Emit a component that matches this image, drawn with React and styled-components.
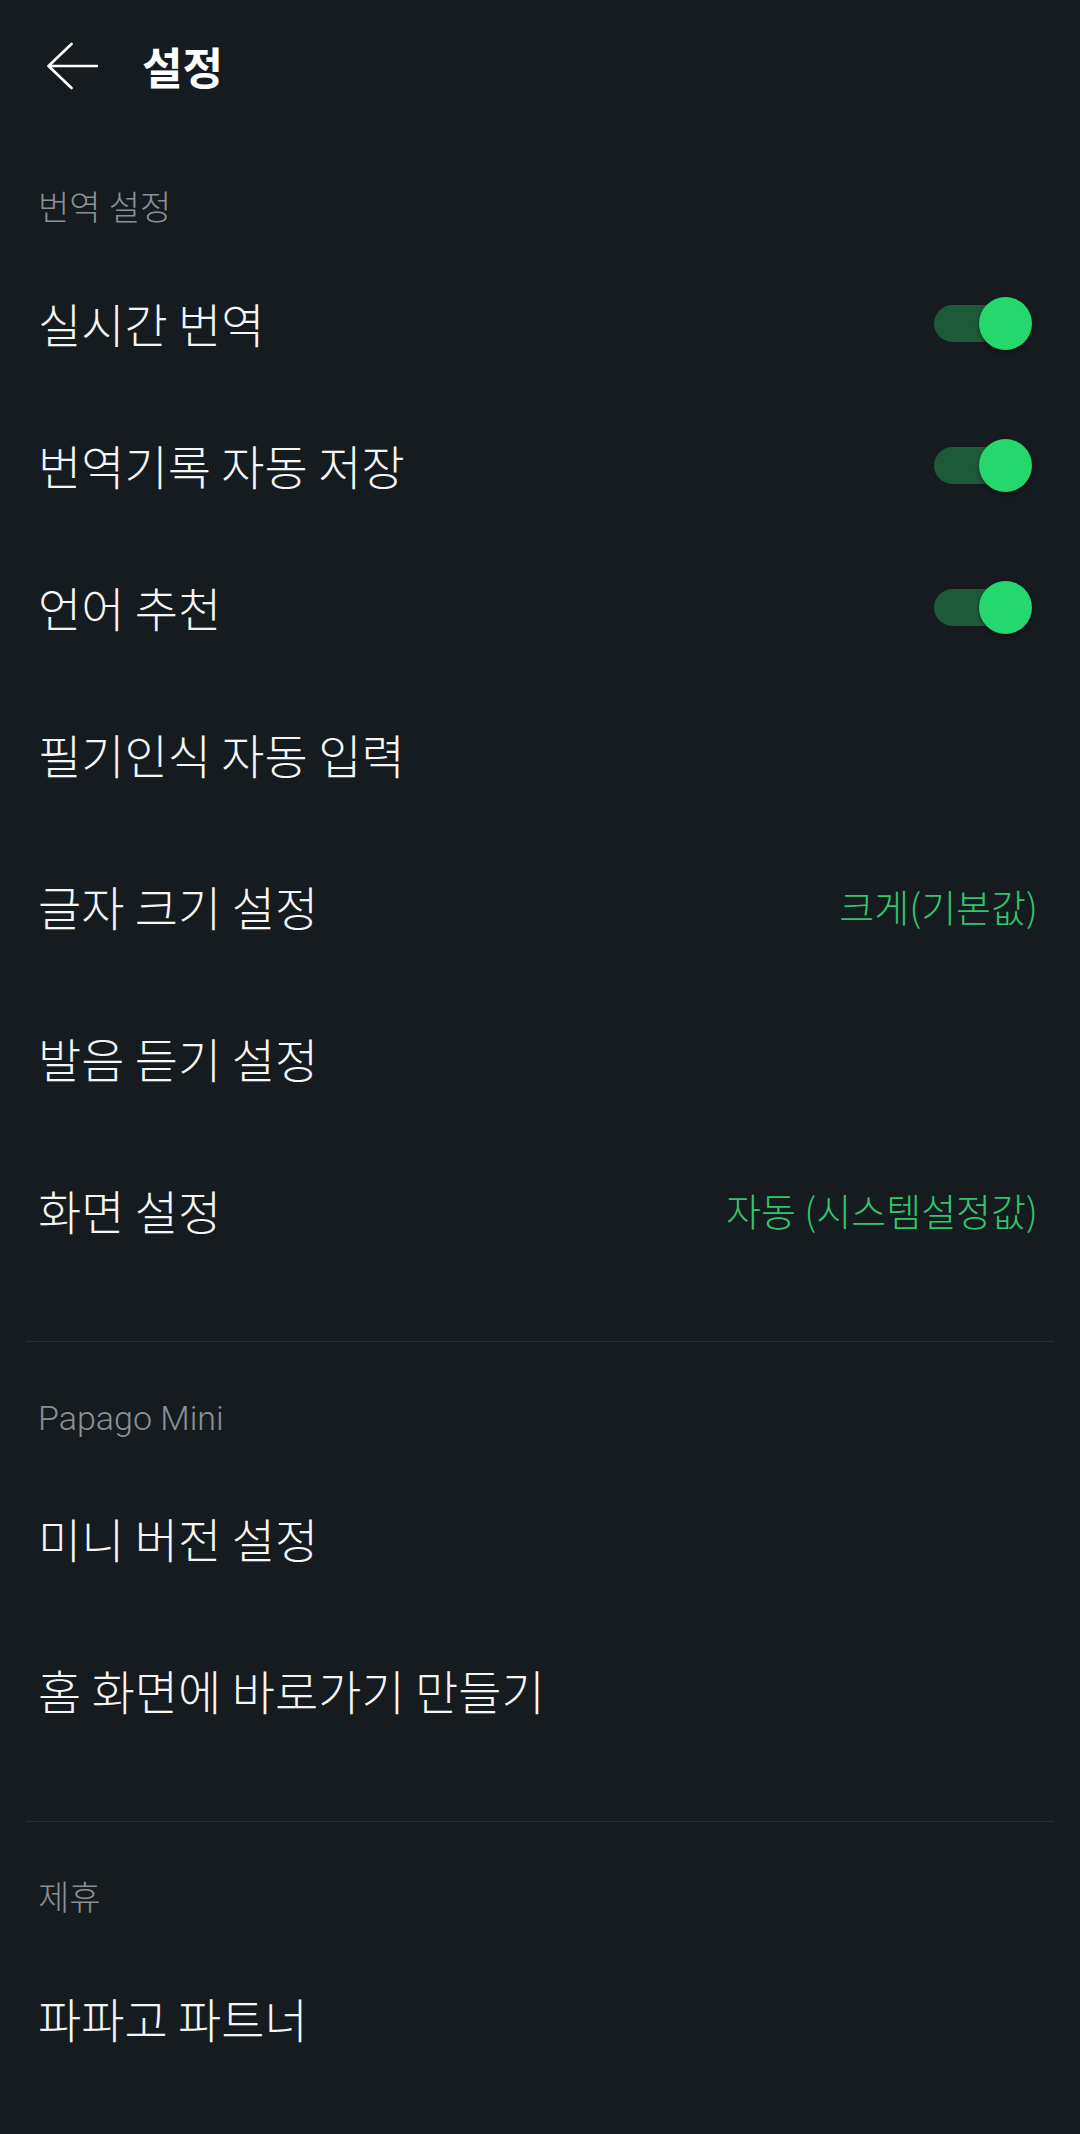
import React from "react";
import styled, { createGlobalStyle } from "styled-components";

const GlobalStyle = createGlobalStyle`
  html, body {
    margin: 0;
    padding: 0;
    background: #161b1f;
  }
  body {
    font-family: Roboto, "Noto Sans CJK KR", sans-serif;
    -webkit-font-smoothing: antialiased;
  }
  * { box-sizing: border-box; }
`;

const Page = styled.div`
  min-height: 100vh;
  background: #161b1f;
  color: #f4f5f5;
  display: flex;
  flex-direction: column;
`;

const Header = styled.header`
  height: 132px;
  display: flex;
  align-items: center;
  padding-left: 46px;
`;

const BackButton = styled.button`
  display: flex;
  align-items: center;
  justify-content: center;
  background: none;
  border: 0;
  padding: 0;
  margin: 0 44px 0 0;
  width: 52px;
  height: 48px;
  cursor: pointer;
`;

const Title = styled.h1`
  margin: 0;
  font-size: 44px;
  line-height: 52px;
  font-weight: 700;
  color: #ffffff;
  font-family: "Noto Sans CJK KR", sans-serif;
`;

const Section = styled.section`
  display: flex;
  flex-direction: column;
  padding-bottom: ${(p) => (p.$last ? 0 : 55)}px;
`;

const SectionTitle = styled.div`
  padding: 56px 38px 24px;
  height: 120px;
  font-size: 34px;
  line-height: 40px;
  font-weight: 300;
  color: #8b9195;
  font-family: Roboto, "Noto Sans CJK KR", sans-serif;
`;

const Row = styled.div`
  height: ${(p) => (p.$toggle ? 142 : 152)}px;
  display: flex;
  align-items: center;
  justify-content: space-between;
  padding: 0 42px 0 38px;
`;

const Label = styled.span`
  font-size: 47px;
  line-height: 56px;
  font-weight: 300;
  color: #f4f5f5;
  font-family: "Noto Sans CJK KR", sans-serif;
  white-space: nowrap;
`;

const Value = styled.span`
  font-size: 38px;
  line-height: 46px;
  font-weight: 300;
  color: #33c46e;
  font-family: "Noto Sans CJK KR", sans-serif;
  white-space: nowrap;
`;

const Switch = styled.div`
  position: relative;
  width: 100px;
  height: 53px;
  margin-right: 6px;
  flex-shrink: 0;
`;

const Track = styled.div`
  position: absolute;
  left: 2px;
  top: 8px;
  width: 86px;
  height: 37px;
  border-radius: 19px;
  background: #1d5a3a;
`;

const Knob = styled.div`
  position: absolute;
  right: 0;
  top: 0;
  width: 53px;
  height: 53px;
  border-radius: 50%;
  background: #24d86e;
  box-shadow: 0 2px 4px rgba(0, 0, 0, 0.45);
`;

const Divider = styled.hr`
  margin: 0 26px;
  border: 0;
  height: 1px;
  background: #283034;
`;

const BackIcon = () => (
  <svg width="52" height="48" viewBox="0 0 52 48" fill="none">
    <path
      d="M2.5 24 H51 M25.5 2 L2.5 24 L25.5 46"
      stroke="#ffffff"
      strokeWidth="2.6"
      strokeLinecap="round"
      strokeLinejoin="round"
    />
  </svg>
);

const Toggle = () => (
  <Switch role="switch" aria-checked="true">
    <Track />
    <Knob />
  </Switch>
);

const sections = [
  {
    title: "번역 설정",
    items: [
      { label: "실시간 번역", toggle: true },
      { label: "번역기록 자동 저장", toggle: true },
      { label: "언어 추천", toggle: true },
      { label: "필기인식 자동 입력" },
      { label: "글자 크기 설정", value: "크게(기본값)" },
      { label: "발음 듣기 설정" },
      { label: "화면 설정", value: "자동 (시스템설정값)" },
    ],
  },
  {
    title: "Papago Mini",
    items: [{ label: "미니 버전 설정" }, { label: "홈 화면에 바로가기 만들기" }],
  },
  {
    title: "제휴",
    items: [{ label: "파파고 파트너" }],
  },
];

export default function App() {
  return (
    <>
      <GlobalStyle />
      <Page>
        <Header>
          <BackButton aria-label="뒤로">
            <BackIcon />
          </BackButton>
          <Title>설정</Title>
        </Header>
        {sections.map((s, i) => (
          <React.Fragment key={s.title}>
            {i > 0 && <Divider />}
            <Section $last={i === sections.length - 1}>
              <SectionTitle>{s.title}</SectionTitle>
              {s.items.map((it) => (
                <Row key={it.label} $toggle={it.toggle}>
                  <Label>{it.label}</Label>
                  {it.toggle && <Toggle />}
                  {it.value && <Value>{it.value}</Value>}
                </Row>
              ))}
            </Section>
          </React.Fragment>
        ))}
      </Page>
    </>
  );
}
